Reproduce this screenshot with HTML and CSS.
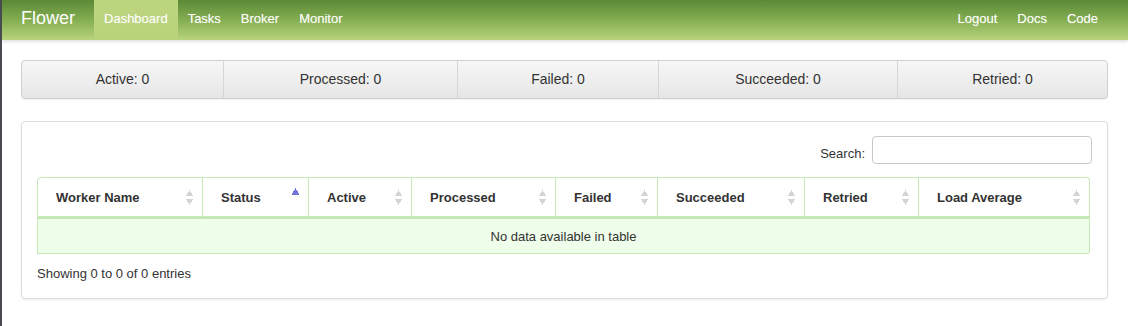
FILE: index.html
```
<!DOCTYPE html>
<html lang="en">
<head>
    <meta charset="UTF-8">
    <title>Flower</title>
    <link rel="stylesheet" href="styles.css">
</head>
<body>

    <div class="navbar">
        <div class="nav-left">
            <a class="brand" href="#">Flower</a>
            <a class="nav-link active" href="#">Dashboard</a>
            <a class="nav-link" href="#">Tasks</a>
            <a class="nav-link" href="#">Broker</a>
            <a class="nav-link" href="#">Monitor</a>
        </div>
        <div class="nav-right">
            <a class="nav-link" href="#">Logout</a>
            <a class="nav-link" href="#">Docs</a>
            <a class="nav-link" href="#">Code</a>
        </div>
    </div>

    <div class="contenido">
        <div class="stats">
            <div class="stat" style="width: 202px">Active: 0</div>
            <div class="stat" style="width: 234px">Processed: 0</div>
            <div class="stat" style="width: 201px">Failed: 0</div>
            <div class="stat" style="width: 239px">Succeeded: 0</div>
            <div class="stat last">Retried: 0</div>
        </div>

        <div class="panel">
            <div class="buscar">
                <label for="search">Search:</label>
                <input type="text" id="search">
            </div>

            <table class="workers">
                <thead>
                    <tr>
                        <th style="width: 166px"><div class="th-in">Worker Name <span class="sort"></span></div></th>
                        <th style="width: 106px"><div class="th-in">Status <span class="sort asc"></span></div></th>
                        <th style="width: 103px"><div class="th-in">Active <span class="sort"></span></div></th>
                        <th style="width: 144px"><div class="th-in">Processed <span class="sort"></span></div></th>
                        <th style="width: 102px"><div class="th-in">Failed <span class="sort"></span></div></th>
                        <th style="width: 147px"><div class="th-in">Succeeded <span class="sort"></span></div></th>
                        <th style="width: 114px"><div class="th-in">Retried <span class="sort"></span></div></th>
                        <th><div class="th-in">Load Average <span class="sort"></span></div></th>
                    </tr>
                </thead>
                <tbody>
                    <tr>
                        <td colspan="8" class="vacio">No data available in table</td>
                    </tr>
                </tbody>
            </table>

            <div class="info">Showing 0 to 0 of 0 entries</div>
        </div>
    </div>

</body>
</html>
```

FILE: styles.css
```
body {
    margin: 0;
    font-family: "Liberation Sans", Arial, sans-serif;
    font-size: 13px;
    color: #333;
    background-color: #fff;
    border-left: 2px solid #474a4f;
    min-height: 326px;
    box-sizing: border-box;
}

/* Barra de navegación */
.navbar {
    height: 40px;
    display: flex;
    justify-content: space-between;
    align-items: stretch;
    padding: 0 20px 0 19px;
    background: linear-gradient(to bottom, #5a8936 0%, #84ae52 50%, #b7d37c 100%);
    box-shadow: 0 2px 3px rgba(0, 0, 0, 0.12);
}

.nav-left,
.nav-right {
    display: flex;
    align-items: stretch;
}

.navbar a {
    color: #fff;
    text-decoration: none;
    display: flex;
    align-items: center;
}

.brand {
    font-size: 18px;
    font-weight: normal;
    margin-right: 19px;
    padding-bottom: 3px;
    color: #eef4e4;
}

.nav-link {
    padding: 0 10px 4px;
    font-size: 13px;
    text-shadow: 0 0 1px rgba(255, 255, 255, 0.35);
}

.nav-link.active {
    background: linear-gradient(to bottom, #bcd57f, #b9d37a);
}

.contenido {
    padding: 20px 20px 0 19px;
}

/* Barra de estadísticas */
.stats {
    display: flex;
    height: 37px;
    border: 1px solid #cfcfcf;
    border-radius: 4px;
    background: linear-gradient(to bottom, #f7f7f7, #e6e6e6);
    box-shadow: 0 1px 1px rgba(0, 0, 0, 0.06);
}

.stat {
    display: flex;
    align-items: center;
    justify-content: center;
    font-size: 14px;
    color: #333;
    border-right: 1px solid #d6d6d6;
    box-sizing: border-box;
    padding-bottom: 1px;
}

.stat.last {
    flex: 1;
    border-right: none;
}

/* Panel de trabajadores */
.panel {
    margin-top: 22px;
    border: 1px solid #dcdcdc;
    border-radius: 4px;
    box-shadow: 0 1px 2px rgba(0, 0, 0, 0.08);
    padding: 14px 15px 17px 15px;
}

.buscar {
    display: flex;
    justify-content: flex-end;
    align-items: center;
    gap: 7px;
}

.buscar label {
    font-size: 13px;
    color: #333;
    padding-top: 6px;
}

.buscar input {
    width: 220px;
    height: 28px;
    box-sizing: border-box;
    border: 1px solid #c9c9c9;
    border-radius: 4px;
    margin: 0;
}

.workers {
    width: 1053px;
    margin-top: 13px;
    border-collapse: separate;
    border-spacing: 0;
    table-layout: fixed;
}

.workers th {
    height: 40px;
    padding: 0 8px 0 18px;
    text-align: left;
    font-weight: bold;
    font-size: 13px;
    color: #333;
    border-top: 1px solid #c6e7b6;
    border-bottom: 1px solid #c6e7b6;
    border-right: 1px solid #c6e7b6;
    box-sizing: border-box;
}

.workers th:first-child {
    border-left: 1px solid #c6e7b6;
    border-top-left-radius: 4px;
}

.workers th:last-child {
    border-top-right-radius: 4px;
}

.th-in {
    display: flex;
    justify-content: space-between;
    align-items: center;
}

.sort {
    width: 9px;
    height: 15px;
    background:
        conic-gradient(from 150deg at 50% 0, #d4d4d4 60deg, transparent 0) 0 0 / 9px 6px no-repeat,
        conic-gradient(from -30deg at 50% 100%, #d4d4d4 60deg, transparent 0) 0 9px / 9px 6px no-repeat;
}

.sort.asc {
    height: 15px;
    margin-top: -4px;
    background: conic-gradient(from 150deg at 50% 0, #7373d8 60deg, transparent 0) 0 0 / 9px 7px no-repeat;
}

.vacio {
    height: 37px;
    text-align: center;
    font-size: 13px;
    color: #333;
    background-color: #effeea;
    border: 1px solid #c6e7b6;
    border-top: 2px solid #c6e7b6;
    border-bottom-right-radius: 3px;
    box-sizing: border-box;
    padding: 1px 0 0;
}

.info {
    margin-top: 12px;
    font-size: 13px;
    color: #333;
}
```
